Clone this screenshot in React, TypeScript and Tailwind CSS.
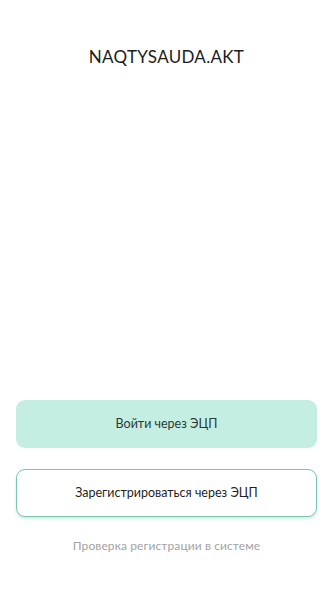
import React from 'react';

export default function App() {
  return (
    <div
      className="h-[592px] w-full bg-white flex flex-col px-4"
      style={{ fontFamily: 'Lato, "Noto Sans", sans-serif' }}
    >
      <h1 className="pt-[46px] text-center text-[17px] leading-[22px] tracking-[0.3px] text-[#1c1c1c] font-normal">
        NAQTYSAUDA.AKT
      </h1>

      <div className="flex-1" />

      <button
        type="button"
        className="h-[48px] w-full rounded-[9px] bg-[#c5eee2] text-[12.5px] text-[#2a3a35]"
      >
        Войти через ЭЦП
      </button>

      <button
        type="button"
        className="mt-[21px] h-[48px] w-full rounded-[9px] border border-[#78c6b0] bg-white text-[12.5px] text-[#1f1f1f] shadow-[0_2px_3px_rgba(80,170,140,0.25)]"
      >
        Зарегистрироваться через ЭЦП
      </button>

      <a className="mt-[21px] mb-[38px] text-center text-[12px] tracking-[0.1px] leading-[16px] text-[#a3a3a3]">
        Проверка регистрации в системе
      </a>
    </div>
  );
}
